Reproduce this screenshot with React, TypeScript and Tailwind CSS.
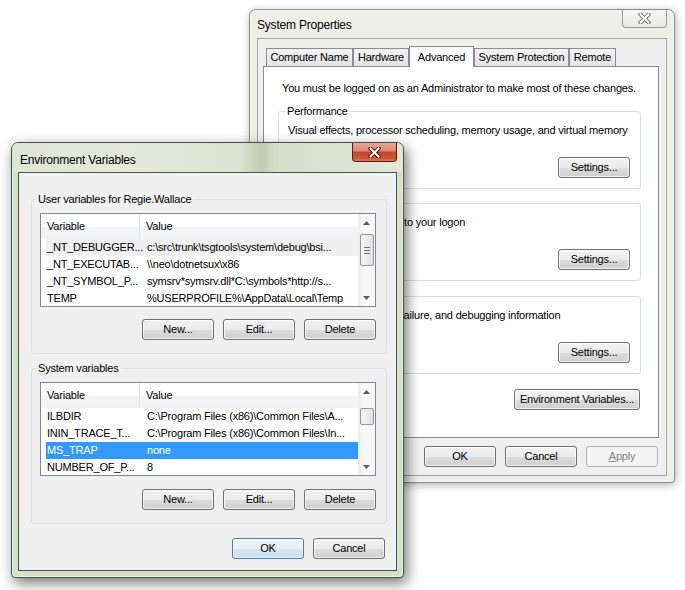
import React from "react";

// ── Windows 7 "System Properties" + "Environment Variables" dialogs ──

function cn(...parts: (string | false | undefined)[]) {
  return parts.filter(Boolean).join(" ");
}

function Btn({
  children,
  className,
  disabled,
  primary,
}: {
  children: React.ReactNode;
  className?: string;
  disabled?: boolean;
  primary?: boolean;
}) {
  return (
    <div
      className={cn(
        "flex h-[21px] w-[72px] shrink-0 items-center justify-center rounded-[3px] border",
        disabled
          ? "border-[#adb2b5] bg-[#f4f4f4] text-[#838383]"
          : primary
            ? "border-[#3c7fb1] bg-[linear-gradient(#eef5fa_0%,#e4eff7_50%,#d5e6f2_51%,#cadfee_100%)] text-black shadow-[inset_0_0_0_1px_rgba(255,255,255,0.6)]"
            : "border-[#707070] bg-[linear-gradient(#f2f2f2_0%,#ebebeb_50%,#dddddd_51%,#cfcfcf_100%)] text-black shadow-[inset_0_0_0_1px_rgba(255,255,255,0.7)]",
        className,
      )}
    >
      {children}
    </div>
  );
}

function Group({
  label,
  legendClass,
  className,
  children,
}: {
  label?: string;
  legendClass?: string;
  className?: string;
  children: React.ReactNode;
}) {
  return (
    <div className={cn("relative rounded-[3px] border border-[#d5dfe5]", className)}>
      {label && (
        <span className={cn("absolute -top-[8px] px-[2px] leading-[14px]", legendClass)}>{label}</span>
      )}
      {children}
    </div>
  );
}

function CloseGlyph({ active }: { active?: boolean }) {
  return (
    <svg width="13" height="11" viewBox="0 0 13 11">
      <path
        d="M2.5 1.5 L10.5 9.5 M10.5 1.5 L2.5 9.5"
        stroke={active ? "#4a1208" : "#7a7a7a"}
        strokeWidth="4"
        strokeLinecap="square"
        fill="none"
      />
      <path
        d="M2.5 1.5 L10.5 9.5 M10.5 1.5 L2.5 9.5"
        stroke="#ffffff"
        strokeWidth="2"
        strokeLinecap="square"
        fill="none"
      />
    </svg>
  );
}

function Arrow({ down }: { down?: boolean }) {
  return (
    <div className="flex h-[17px] shrink-0 items-center justify-center">
      <svg width="7" height="4" viewBox="0 0 7 4">
        <path d={down ? "M0 0 H7 L3.5 4 Z" : "M0 4 H7 L3.5 0 Z"} fill="#5a5a5a" />
      </svg>
    </div>
  );
}

type Row = { name: string; value: string; sel?: "gray" | "blue" };

function VarList({ rows, thumbClass, grip }: { rows: Row[]; thumbClass: string; grip?: boolean }) {
  return (
    <div className="ml-[8px] flex h-[94px] w-[336px] border border-[#828790] bg-white">
      <div className="flex min-w-0 flex-1 flex-col">
        <div className="flex h-[25px] shrink-0 items-center bg-[linear-gradient(#ffffff_0%,#ffffff_50%,#f4f5f7_51%,#f1f2f4_100%)]">
          <div className="flex h-full w-[99px] items-center border-r border-[#dfe2e7] pl-[6px]">Variable</div>
          <div className="pl-[6px]">Value</div>
        </div>
        {rows.map((r) => (
          <div
            key={r.name}
            className={cn(
              "ml-[5px] flex h-[17px] shrink-0 items-center whitespace-nowrap",
              r.sel === "gray" && "bg-[#f0f0f0]",
              r.sel === "blue" && "bg-[#3399ff] text-white",
            )}
          >
            <span className="w-[100px] shrink-0 overflow-hidden pl-[1px]">{r.name}</span>
            <span className="overflow-hidden pl-[1px]">{r.value}</span>
          </div>
        ))}
      </div>
      <div className="flex w-[17px] shrink-0 flex-col bg-[linear-gradient(90deg,#ececec,#f8f8f8_30%,#f8f8f8)]">
        <Arrow />
        <div
          className={cn(
            "mx-auto flex w-[14px] flex-col items-center justify-center gap-[2px] rounded-[2px] border border-[#959595] bg-[linear-gradient(90deg,#f6f6f6,#e0e0e0)]",
            thumbClass,
          )}
        >
          {grip && (
            <>
              <div className="h-px w-[6px] bg-[#6f6f6f]" />
              <div className="h-px w-[6px] bg-[#6f6f6f]" />
              <div className="h-px w-[6px] bg-[#6f6f6f]" />
            </>
          )}
        </div>
        <div className="mt-auto">
          <Arrow down />
        </div>
      </div>
    </div>
  );
}

const tabs = [
  { label: "Computer Name", w: "w-[87px]" },
  { label: "Hardware", w: "w-[56px]" },
  { label: "Advanced", w: "w-[65px]", sel: true },
  { label: "System Protection", w: "w-[95px]" },
  { label: "Remote", w: "w-[47px]" },
];

function SystemProperties() {
  return (
    <div className="absolute left-[249px] top-[9px] flex h-[474px] w-[426px] flex-col rounded-t-[7px] rounded-b-[4px] border border-[#8a8a8a] bg-[#efefe9] px-[7px] pb-[6px] shadow-[inset_0_0_0_1px_rgba(255,255,255,0.7),1px_2px_8px_rgba(0,0,0,0.3)]">
      <div className="flex h-[28px] shrink-0 items-start justify-between">
        <span className="mt-[6px] text-[12px] tracking-[-0.2px]">System Properties</span>
        <div className="flex h-[18px] w-[45px] items-center justify-center rounded-b-[4px] border border-t-0 border-[#9a9a9a] bg-[linear-gradient(#f7f7f5,#e9e9e4)]">
          <CloseGlyph />
        </div>
      </div>
      <div className="flex min-h-0 flex-1 flex-col border border-[#a3a3a3] bg-[#f0f0f0]">
        <div className="ml-[8px] mt-[7px] flex h-[20px] items-end">
          {tabs.map((t) =>
            t.sel ? (
              <div
                key={t.label}
                className={cn(
                  "relative z-10 -mb-px flex h-[21px] items-start justify-center border border-b-0 border-[#898c95] bg-white pt-[2px]",
                  t.w,
                )}
              >
                {t.label}
              </div>
            ) : (
              <div
                key={t.label}
                className={cn(
                  "flex h-[18px] items-center justify-center border border-b-0 border-[#898c95] bg-[linear-gradient(#f3f3f3,#e3e3e3)]",
                  t.w,
                )}
              >
                {t.label}
              </div>
            ),
          )}
        </div>
        <div className="ml-[5px] flex h-[372px] w-[396px] flex-col border border-[#898c95] bg-white">
          <p className="ml-[18px] mt-[14px] whitespace-nowrap leading-[14px]">
            You must be logged on as an Administrator to make most of these changes.
          </p>
          <Group label="Performance" legendClass="left-[6px] bg-white" className="ml-[14px] mt-[16px] w-[363px] pb-[10px] pr-[10px] pt-[11px]">
            <p className="ml-[9px] whitespace-nowrap leading-[14px]">
              Visual effects, processor scheduling, memory usage, and virtual memory
            </p>
            <div className="mt-[20px] flex justify-end">
              <Btn>Settings...</Btn>
            </div>
          </Group>
          <Group className="ml-[14px] mt-[14px] w-[363px] pb-[10px] pr-[10px] pt-[11px]">
            <p className="ml-[9px] whitespace-nowrap leading-[14px]">Desktop settings related to your logon</p>
            <div className="mt-[20px] flex justify-end">
              <Btn>Settings...</Btn>
            </div>
          </Group>
          <Group className="ml-[14px] mt-[15px] w-[363px] pb-[10px] pr-[10px] pt-[11px]">
            <p className="ml-[9px] whitespace-nowrap leading-[14px]">
              System startup, system failure, and debugging information
            </p>
            <div className="mt-[20px] flex justify-end">
              <Btn>Settings...</Btn>
            </div>
          </Group>
          <div className="mr-[18px] mt-[15px] flex justify-end">
            <Btn className="w-[126px]">Environment Variables...</Btn>
          </div>
        </div>
        <div className="mr-[8px] mt-[8px] flex justify-end gap-[9px]">
          <Btn>OK</Btn>
          <Btn>Cancel</Btn>
          <Btn disabled>
            <span>
              <span className="underline">A</span>pply
            </span>
          </Btn>
        </div>
      </div>
    </div>
  );
}

const userRows: Row[] = [
  { name: "_NT_DEBUGGER...", value: "c:\\src\\trunk\\tsgtools\\system\\debug\\bsi...", sel: "gray" },
  { name: "_NT_EXECUTAB...", value: "\\\\neo\\dotnetsux\\x86" },
  { name: "_NT_SYMBOL_P...", value: "symsrv*symsrv.dll*C:\\symbols*http://s..." },
  { name: "TEMP", value: "%USERPROFILE%\\AppData\\Local\\Temp" },
];

const systemRows: Row[] = [
  { name: "ILBDIR", value: "C:\\Program Files (x86)\\Common Files\\A..." },
  { name: "ININ_TRACE_T...", value: "C:\\Program Files (x86)\\Common Files\\In..." },
  { name: "MS_TRAP", value: "none", sel: "blue" },
  { name: "NUMBER_OF_P...", value: "8" },
];

function EnvironmentVariables() {
  return (
    <div className="absolute left-[11px] top-[142px] flex h-[436px] w-[393px] flex-col rounded-t-[7px] rounded-b-[4px] border border-[#4a4f46] bg-[#d7dfca] px-[6px] pb-[6px] shadow-[inset_0_0_0_1px_rgba(255,255,255,0.55),3px_5px_14px_rgba(0,0,0,0.55)]">
      <div className="-mx-[6px] flex h-[29px] shrink-0 items-start justify-between rounded-t-[6px] bg-[linear-gradient(90deg,#dfe5d5_0%,#e4e9dc_30%,#dde4d2_58%,#c9d1bb_62%,#c2cab3_64%,#d6ddc9_67%,#e2e8d9_100%)] px-[6px]">
        <span className="ml-[2px] mt-[8px] text-[12px] tracking-[-0.2px]">Environment Variables</span>
        <div className="flex h-[19px] w-[45px] items-center justify-center rounded-b-[4px] border border-t-0 border-[#5b1a10] bg-[linear-gradient(#e9a897_0%,#dc8670_45%,#c7462c_50%,#cf5638_85%,#e07a55_100%)]">
          <CloseGlyph active />
        </div>
      </div>
      <div className="flex min-h-0 flex-1 flex-col border border-[#4d5249] bg-[#f0f0f0]">
        <Group label="User variables for Regie.Wallace" legendClass="left-[4px] bg-[#f0f0f0]" className="ml-[12px] mt-[26px] w-[356px] pb-[13px] pt-[13px]">
          <VarList rows={userRows} thumbClass="mt-[3px] h-[32px]" grip />
          <div className="mr-[10px] mt-[12px] flex justify-end gap-[9px]">
            <Btn>New...</Btn>
            <Btn>Edit...</Btn>
            <Btn>Delete</Btn>
          </div>
        </Group>
        <Group label="System variables" legendClass="left-[4px] bg-[#f0f0f0]" className="ml-[12px] mt-[14px] w-[356px] pb-[13px] pt-[13px]">
          <VarList rows={systemRows} thumbClass="mt-[8px] h-[17px]" />
          <div className="mr-[10px] mt-[13px] flex justify-end gap-[9px]">
            <Btn>New...</Btn>
            <Btn>Edit...</Btn>
            <Btn>Delete</Btn>
          </div>
        </Group>
        <div className="mr-[11px] mt-[14px] flex justify-end gap-[9px]">
          <Btn primary>OK</Btn>
          <Btn>Cancel</Btn>
        </div>
      </div>
    </div>
  );
}

export default function App() {
  return (
    <div className="relative h-[590px] w-[685px] overflow-hidden bg-white font-['Liberation_Sans',Arial,sans-serif] text-[11px] tracking-[-0.2px] text-black">
      <SystemProperties />
      <EnvironmentVariables />
    </div>
  );
}
